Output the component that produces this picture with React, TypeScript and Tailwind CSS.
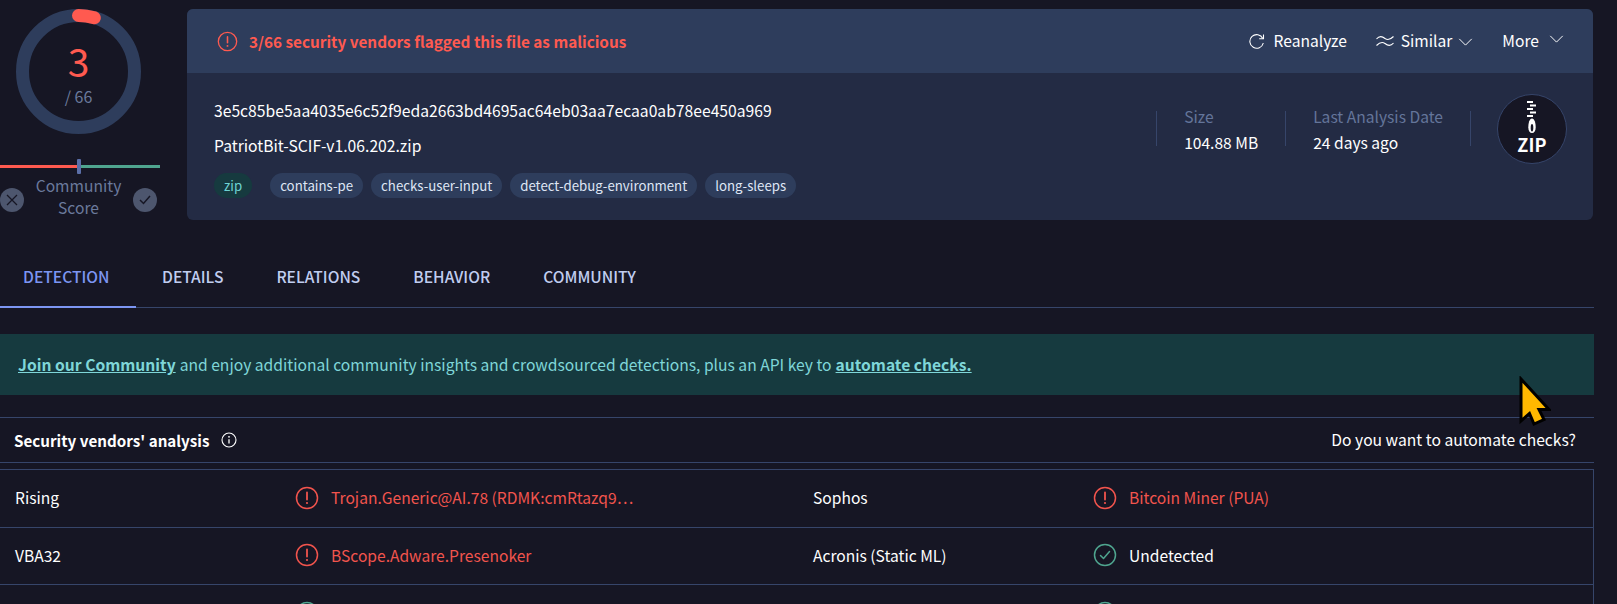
/**
 * File report header: score ring, summary card, tabs and the vendor table.
 */
import React from 'react'

function AlertIcon({ className }: { className: string }) {
    return (
        <svg viewBox="0 0 24 24" fill="none" stroke="currentColor" strokeWidth="1.5" className={className}>
            <circle cx="12" cy="12" r="10.5" />
            <path d="M12 6.5v7" strokeWidth="1.8" strokeLinecap="round" />
            <circle cx="12" cy="17" r="1.1" fill="currentColor" stroke="none" />
        </svg>
    )
}

function CheckIcon({ className }: { className: string }) {
    return (
        <svg viewBox="0 0 24 24" fill="none" stroke="currentColor" strokeWidth="1.5" className={className}>
            <circle cx="12" cy="12" r="10.5" />
            <path d="M7.5 12.5l3 3 6-7" strokeLinecap="round" strokeLinejoin="round" />
        </svg>
    )
}

function Chevron({ className }: { className: string }) {
    return (
        <svg viewBox="0 0 16 9" fill="none" stroke="currentColor" strokeWidth="1.1" className={className}>
            <path d="M1 1l7 7 7-7" />
        </svg>
    )
}

function ZipBadge() {
    return (
        <div className="w-[70px] h-[70px] rounded-full bg-[#161624] border border-[#36456a] flex flex-col items-center pt-[6px]">
            <svg viewBox="0 0 10 34" className="w-[10px] h-[34px]" fill="#ffffff">
                <rect x="0" y="0" width="6" height="2" />
                <rect x="3" y="3.500" width="6" height="2" />
                <rect x="0" y="7" width="6" height="2" />
                <rect x="3" y="10.500" width="6" height="2" />
                <rect x="0" y="14" width="6" height="2" />
                <path d="M5 17.500c2.500 0 3.700 4.500 3.700 9 0 3.500-1.500 5.500-3.700 5.500s-3.700-2-3.700-5.500c0-4.500 1.200-9 3.700-9z" />
                <path d="M5 23c.9 0 1.300 1.500 1.300 3.800S5.900 30.500 5 30.500s-1.300-1.400-1.300-3.700S4.100 23 5 23z" fill="#161624" />
            </svg>
            <span className="text-[18px] leading-[18px] font-bold text-white tracking-[0.2px]">ZIP</span>
        </div>
    )
}

function ScoreColumn() {
    return (
        <div className="w-[160px] shrink-0 flex flex-col">
            <div className="relative w-[125px] h-[125px] ml-[16px]">
                <svg viewBox="0 0 125 125" fill="none" className="w-[125px] h-[125px]">
                    <circle cx="62.500" cy="62.500" r="56" stroke="#2e3d5c" strokeWidth="13" />
                    <path d="M62.500 6.500A56 56 0 0 1 78.300 8.800" stroke="#ff5a50" strokeWidth="13" strokeLinecap="round" />
                </svg>
                <div className="absolute inset-0 flex flex-col items-center">
                    <span className="mt-[27px] text-[39px] leading-[48px] text-[#ff5a50]">3</span>
                    <span className="text-[16px] leading-[20px] mt-[2px] text-[#6b7a9c]">/ 66</span>
                </div>
            </div>
            <div className="relative mt-[25px] h-[15px] flex items-center">
                <div className="h-[3px] w-[79px] bg-[#ff5a50]" />
                <div className="h-[3px] flex-1 bg-[#4fa58f]" />
                <div className="absolute left-[77px] top-0 w-[4px] h-[15px] rounded-[1px] bg-[#5b6fa8]" />
            </div>
            <div className="flex items-start">
                <div className="mt-[14px] w-[24px] h-[24px] rounded-full bg-[#4d566e] flex items-center justify-center">
                    <svg viewBox="0 0 12 12" fill="none" stroke="#161624" strokeWidth="1.3" className="w-[12px] h-[12px]">
                        <path d="M1 1l10 10M11 1L1 11" />
                    </svg>
                </div>
                <div className="w-[109px] text-center text-[15.6px] leading-[22px] text-[#6b7a9c]">
                    Community
                    <br />
                    Score
                </div>
                <div className="mt-[14px] w-[24px] h-[24px] rounded-full bg-[#4d566e] flex items-center justify-center">
                    <svg viewBox="0 0 12 10" fill="none" stroke="#161624" strokeWidth="1.5" className="w-[12px] h-[10px]">
                        <path d="M1 5l3.500 3.500L11 1" />
                    </svg>
                </div>
            </div>
        </div>
    )
}

function SummaryCard() {
    const tags = ['contains-pe', 'checks-user-input', 'detect-debug-environment', 'long-sleeps']
    return (
        <div className="ml-[27px] w-[1406px] h-[211px] rounded-[6px] overflow-hidden bg-[#232b44]">
            <div className="h-[64px] bg-[#2e3d5c] flex items-center pl-[30px] pr-[29px] text-[15.6px] text-white">
                <AlertIcon className="w-[21px] h-[21px] text-[#ff5a50]" />
                <span className="ml-[11px] text-[15.3px] font-semibold text-[#ff5a50]">3/66 security vendors flagged this file as malicious</span>
                <div className="ml-auto flex items-center">
                    <svg viewBox="0 0 16 16" fill="none" stroke="currentColor" strokeWidth="1.100" className="w-[16px] h-[16px]">
                        <path d="M13.800 5.500A6.800 6.800 0 1 0 14.300 10" />
                        <path d="M14.500 1.500v4.300h-4.300" />
                    </svg>
                    <span className="ml-[9px]">Reanalyze</span>
                    <svg viewBox="0 0 18 12" fill="none" stroke="currentColor" strokeWidth="1.100" className="ml-[29px] w-[18px] h-[12px]">
                        <path d="M.5 4C3 1 6 1 9 3.500C12 5.500 15 4 17.500 1.500" />
                        <path d="M.5 10.500C3 8 6 6.500 9 8.500C12 11 15 11 17.500 8" />
                    </svg>
                    <span className="ml-[7px]">Similar</span>
                    <Chevron className="ml-[6px] w-[15px] h-[8px] mt-[3px]" />
                    <span className="ml-[29px]">More</span>
                    <Chevron className="ml-[10px] w-[15px] h-[8px] mt-[-3px]" />
                </div>
            </div>
            <div className="flex">
                <div className="pl-[27px] flex-1 text-white text-[15.7px]">
                    <div className="mt-[27px] leading-[22px]">3e5c85be5aa4035e6c52f9eda2663bd4695ac64eb03aa7ecaa0ab78ee450a969</div>
                    <div className="mt-[13px] leading-[22px]">PatriotBit-SCIF-v1.06.202.zip</div>
                    <div className="mt-[16px] flex items-center text-[13.25px] leading-[25px] text-[#dfe6f5]">
                        <span className="h-[25px] px-[10px] rounded-full bg-[#163a3f] text-[#6ed3d3]">zip</span>
                        <div className="ml-[18px] flex gap-[8px]">
                            {tags.map((tag) => (
                                <span key={tag} className="h-[25px] px-[10px] rounded-full bg-[#2e3d5c]">
                                    {tag}
                                </span>
                            ))}
                        </div>
                    </div>
                </div>
                <div className="flex items-start pt-[21px] pr-[26px]">
                    <div className="mt-[17px] flex text-[15.6px] leading-[26px]">
                        <div className="border-l border-[#36456a] h-[35px] px-[27px]">
                            <div className="mt-[-8px] text-[#64759a]">Size</div>
                            <div className="text-white">104.88 MB</div>
                        </div>
                        <div className="border-l border-[#36456a] h-[35px] px-[27px]">
                            <div className="mt-[-8px] text-[#64759a]">Last Analysis Date</div>
                            <div className="text-white">24 days ago</div>
                        </div>
                        <div className="border-l border-[#36456a] h-[35px] w-[27px]" />
                    </div>
                    <ZipBadge />
                </div>
            </div>
        </div>
    )
}

function Tabs() {
    const tabs = ['DETAILS', 'RELATIONS', 'BEHAVIOR', 'COMMUNITY']
    return (
        <div className="mt-[30px] h-[58px] border-b border-[#36456a] flex text-[15.6px] font-medium">
            <div className="h-[58px] w-[136px] pl-[23px] pt-[15px] border-b-[2px] border-[#7c95f2] text-[#7c95f2]">DETECTION</div>
            <div className="flex gap-[53px] ml-[26px] pt-[15px] text-[#c0cdf0]">
                {tabs.map((tab) => (
                    <span key={tab}>{tab}</span>
                ))}
            </div>
        </div>
    )
}

type Row = { vendor: string; result: string; flagged: boolean }

function VendorCell({ vendor, result, flagged }: Row) {
    return (
        <div className="flex items-center h-[56.6px] pb-[1px] pl-[15px]">
            <div className="w-[280px] shrink-0 text-white">{vendor}</div>
            {flagged ? (
                <AlertIcon className="w-[24px] h-[24px] shrink-0 text-[#f2544d]" />
            ) : (
                <CheckIcon className="w-[24px] h-[24px] shrink-0 text-[#4fa58f]" />
            )}
            <div className={`ml-[12px] w-[310px] truncate ${flagged ? 'text-[#f2544d]' : 'text-white'}`}>{result}</div>
        </div>
    )
}

export default function App(): React.ReactElement {
    return (
        <div className="relative h-[604px] w-[1617px] overflow-hidden bg-[#161624] font-['Noto_Sans_CJK_SC','Noto_Sans',sans-serif]">
            <div className="w-[1594px]">
                <div className="flex pt-[9px]">
                    <ScoreColumn />
                    <SummaryCard />
                </div>
                <Tabs />

                <div className="mt-[26px] h-[61px] bg-[#163a3f] flex items-center pl-[18px] text-[15.65px] text-[#7fd6d8]">
                    <a className="font-bold underline">Join our Community</a>
                    <span className="ml-[4px]">and enjoy additional community insights and crowdsourced detections, plus an API key to</span>
                    <a className="ml-[4px] font-bold underline">automate checks.</a>
                </div>

                <div className="mt-[22px] h-[46px] border-y border-[#36456a] flex items-center justify-between pl-[14px] pr-[18px] text-[15.65px] text-white">
                    <div className="flex items-center">
                        <span className="font-semibold text-[15.2px]">Security vendors' analysis</span>
                        <svg viewBox="0 0 16 16" fill="none" stroke="currentColor" strokeWidth="1.100" className="ml-[11px] w-[16px] h-[16px]">
                            <circle cx="8" cy="8" r="7" />
                            <path d="M8 7.200v4.300" strokeWidth="1.300" />
                            <circle cx="8" cy="4.800" r=".9" fill="currentColor" stroke="none" />
                        </svg>
                    </div>
                    <span>Do you want to automate checks?</span>
                </div>

                <div className="mt-[6px] border border-[#36456a] border-l-0 text-[15.6px] divide-y divide-[#36456a]">
                    <div className="grid grid-cols-[798px_1fr]">
                        <VendorCell vendor="Rising" result="Trojan.Generic@AI.78 (RDMK:cmRtazq9…" flagged />
                        <VendorCell vendor="Sophos" result="Bitcoin Miner (PUA)" flagged />
                    </div>
                    <div className="grid grid-cols-[798px_1fr]">
                        <VendorCell vendor="VBA32" result="BScope.Adware.Presenoker" flagged />
                        <VendorCell vendor="Acronis (Static ML)" result="Undetected" flagged={false} />
                    </div>
                    <div className="grid grid-cols-[798px_1fr]">
                        <VendorCell vendor="" result="" flagged={false} />
                        <VendorCell vendor="" result="" flagged={false} />
                    </div>
                </div>
            </div>

            {/* mouse pointer captured in the screenshot */}
            <svg viewBox="0 0 34 50" className="absolute left-[1517px] top-[376px] w-[34px] h-[50px]">
                <path
                    d="M4 3L4 45L12.500 37.500L17 48L27 43.500L22 33.500L32 33.500Z"
                    fill="#ffb900"
                    stroke="#000000"
                    strokeWidth="3"
                />
            </svg>
        </div>
    )
}
